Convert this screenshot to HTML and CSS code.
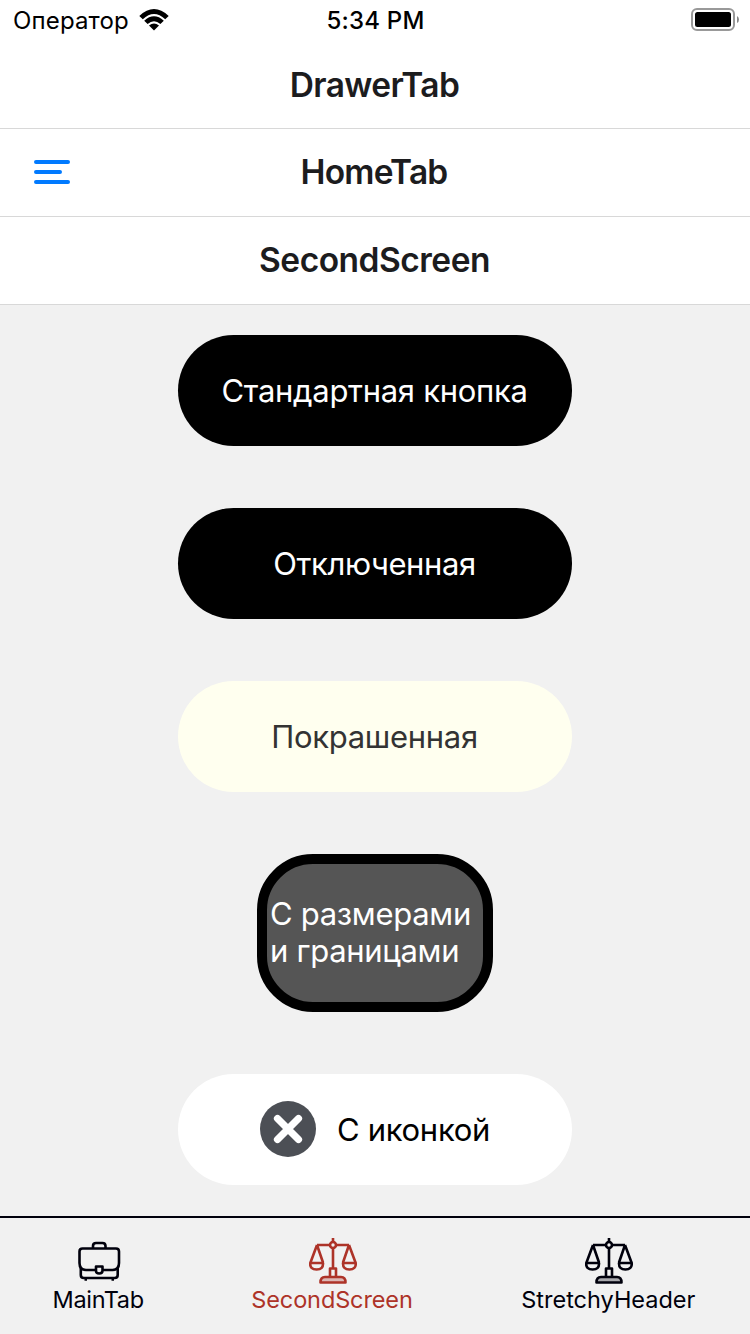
FILE: index.html
```
<!DOCTYPE html>
<html lang="ru">
<head>
<meta charset="utf-8">
<title>SecondScreen</title>
<link rel="stylesheet" href="styles.css">
</head>
<body>
<div class="app">
  <div class="status">
    <div class="carrier"><span class="operator">Оператор</span>
      <svg class="wifi" width="30" height="22" viewBox="0 0 30 22">
        <path d="M0.3 7Q15-6.800 29.700 7L26.200 10.200Q15-.1 3.800 10.200Z"/>
        <path d="M5.200 11.700Q15 2.800 24.800 11.700L21.400 15Q15 9.400 8.600 15Z"/>
        <path d="M10 16.500Q15 12.400 20 16.500L15 21.600Z"/>
      </svg>
    </div>
    <div class="time"><span>5:34 PM</span></div>
    <div class="power">
      <svg width="48" height="23" viewBox="0 0 48 23">
        <rect x="1" y="1" width="42" height="21" rx="5" fill="none" stroke="#999" stroke-width="2"/>
        <rect x="4" y="4" width="36" height="15" rx="2.5"/>
        <path d="M46 8Q48 9 48 11.5T46 15Z" fill="#888"/>
      </svg>
    </div>
  </div>
  <header class="bar bar-drawer"><h1 class="title title-drawer">DrawerTab</h1></header>
  <header class="bar">
    <svg class="menu" width="36" height="24" viewBox="0 0 36 24"><path d="M2 2H34M2 12H26M2 22H34"/></svg>
    <h1 class="title title-home">HomeTab</h1>
  </header>
  <header class="bar"><h1 class="title title-second">SecondScreen</h1></header>
  <main class="content">
    <button class="btn"><span class="t-standard">Стандартная кнопка</span></button>
    <button class="btn"><span class="t-disabled">Отключенная</span></button>
    <button class="btn btn-painted"><span class="t-painted">Покрашенная</span></button>
    <button class="btn btn-sized"><span class="t-sized">С размерами<br>и границами</span></button>
    <button class="btn btn-icon">
      <svg width="60" height="60" viewBox="0 0 60 60"><circle cx="30" cy="30" r="28" fill="#4c4f55"/><path d="M19.500 19.500L40.500 40.500M40.500 19.500L19.500 40.500" stroke="#fff" stroke-width="7.200" stroke-linecap="round"/></svg>
      <span class="t-icon">С иконкой</span>
    </button>
  </main>
  <nav class="tabs">
    <a class="tab tab-main">
      <svg class="glyph" width="48" height="48" viewBox="0 0 48 48">
        <path d="M18 11.500V9Q18 6 21 6H27.500Q30.500 6 30.500 9V11.500"/>
        <path d="M20.500 33H11Q4.500 33 4.500 26V14.500Q4.500 11.500 7.500 11.500H41Q44 11.500 44 14.500V26Q44 33 37.500 33H27.500"/>
        <path d="M5.800 30.500V38Q5.800 41 8.800 41H39.700Q42.700 41 42.700 38V30.500"/>
        <path d="M21 29.500H27.500V33.500Q27.500 36.500 24.200 36.500T21 33.500ZM9.500 42.500H12M36.500 42.500H39"/>
      </svg>
      <span class="label">MainTab</span>
    </a>
    <a class="tab tab-second">
      <svg class="glyph" width="48" height="48" viewBox="0 0 48 48">
        <path d="M24 1V5M24 11V31M8 8H21M27 8H40M8 8L1.500 25.500M8 8L14 25.500M40 8L34 25.500M40 8L46.500 25.500"/>
        <circle cx="24" cy="8" r="3"/>
        <path d="M1.200 26H14Q14.500 32.500 7.600 32.500T1.200 26ZM34 26H46.800Q47 32.500 40.400 32.500T34 26Z"/>
        <path d="M21 39V31.500H27V39"/>
        <path class="base" d="M11.500 45.500Q11.500 40 16 40H32Q36.500 40 36.500 45.500Z"/>
      </svg>
      <span class="label">SecondScreen</span>
    </a>
    <a class="tab tab-stretchy">
      <svg class="glyph" width="48" height="48" viewBox="0 0 48 48">
        <path d="M24 1V5M24 11V31M8 8H21M27 8H40M8 8L1.500 25.500M8 8L14 25.500M40 8L34 25.500M40 8L46.500 25.500"/>
        <circle cx="24" cy="8" r="3"/>
        <path d="M1.200 26H14Q14.500 32.500 7.600 32.500T1.200 26ZM34 26H46.800Q47 32.500 40.400 32.500T34 26Z"/>
        <path d="M21 39V31.500H27V39"/>
        <path class="base" d="M11.500 45.500Q11.500 40 16 40H32Q36.500 40 36.500 45.500Z"/>
      </svg>
      <span class="label">StretchyHeader</span>
    </a>
  </nav>
</div>
</body>
</html>
```
FILE: styles.css
```
* { box-sizing: border-box; }
body { margin: 0; font-family: Inter, "Noto Sans", sans-serif; color: #000; }
.app { width: 750px; height: 1334px; display: flex; flex-direction: column; background: #f1f1f1; overflow: hidden; }
.status { height: 40px; display: grid; grid-template-columns: 1fr 1fr 1fr; background: #fff; font-size: 24px; line-height: 42px; white-space: nowrap; }
.carrier { display: flex; padding-left: 13px; gap: 9px; }
.operator { width: 117px; letter-spacing: 0.15px; }
.wifi { margin-top: 9px; }
.time { text-align: center; font-weight: 500; letter-spacing: 0.2px; padding-left: 1px; }
.power { display: flex; justify-content: flex-end; padding: 8px 11px 0 0; }
.bar { height: 88px; flex: none; display: grid; align-items: center; justify-items: center; background: #fff; border-bottom: 1px solid #d8d8d8; padding-bottom: 2px; }
.bar-drawer { height: 89px; padding: 1px 0 0; }
.bar > * { grid-area: 1 / 1; }
.title { margin: 0; padding-right: 1px; font-size: 33.5px; line-height: 42px; font-weight: 600; color: #1c1c1e; }
.title-drawer { letter-spacing: -0.6px; }
.title-home { letter-spacing: -0.8px; padding-right: 2px; }
.title-second { letter-spacing: -0.5px; }
.menu { justify-self: start; margin-left: 34px; fill: none; stroke: #007aff; stroke-width: 4; stroke-linecap: round; }
.content { flex: 1; display: flex; flex-direction: column; align-items: center; gap: 62px; padding-top: 30px; }
.btn { width: 394px; height: 111px; flex: none; display: flex; align-items: center; justify-content: center; margin: 0; padding: 0 1px 1px 0; border: 0; border-radius: 56px; background: #000; color: #fff; font: 400 31px/37px Inter, "Noto Sans", sans-serif; letter-spacing: -0.3px; white-space: nowrap; }
.t-disabled { letter-spacing: -0.4px; }
.btn-painted { background: #ffffef; color: #333; }
.btn-sized { width: 236px; height: 158px; border: 10px solid #000; background: #555; text-align: left; justify-content: flex-start; padding: 0 0 3px 3px; }
.btn-icon { background: #fff; color: #000; gap: 19px; padding-right: 2px; }
.btn-icon svg { margin-top: 0; }
.tabs { height: 118px; flex: none; display: flex; justify-content: space-around; border-top: 2px solid #00000c; padding-top: 19px; }
.tab { display: flex; flex-direction: column; align-items: center; color: #00000c; font-size: 23.5px; line-height: 30px; white-space: nowrap; }
.tab-main { width: 89px; letter-spacing: -0.3px; }
.tab-second { width: 162px; color: #ad3328; letter-spacing: -0.12px; }
.tab-second .glyph { margin-left: 1px; }
.tab-stretchy { width: 174px; letter-spacing: 0; }
.label { margin-right: 1px; }
.glyph { flex: none; fill: none; stroke: currentColor; stroke-width: 2.6; stroke-linejoin: round; }
.base { fill: currentColor; fill-opacity: 0.3; }
```
